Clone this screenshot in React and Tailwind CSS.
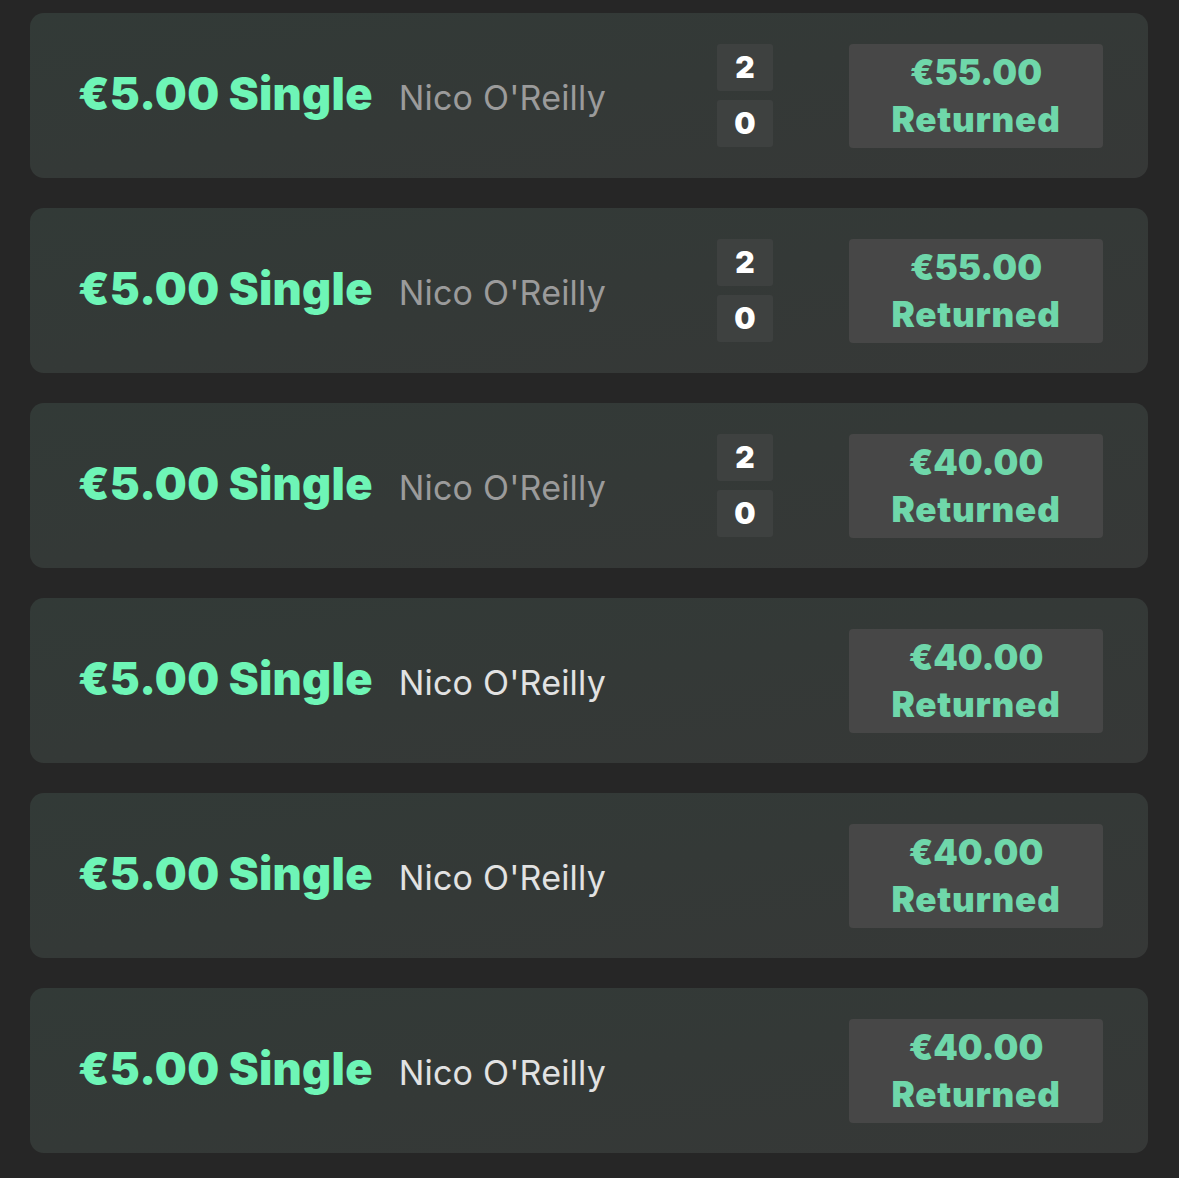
const bets = [
  { stake: '€5.00', type: 'Single', player: "Nico O'Reilly", score: ['2', '0'], returned: '€55.00', settled: true },
  { stake: '€5.00', type: 'Single', player: "Nico O'Reilly", score: ['2', '0'], returned: '€55.00', settled: true },
  { stake: '€5.00', type: 'Single', player: "Nico O'Reilly", score: ['2', '0'], returned: '€40.00', settled: true },
  { stake: '€5.00', type: 'Single', player: "Nico O'Reilly", returned: '€40.00' },
  { stake: '€5.00', type: 'Single', player: "Nico O'Reilly", returned: '€40.00' },
  { stake: '€5.00', type: 'Single', player: "Nico O'Reilly", returned: '€40.00' },
]

function BetCard({ bet }) {
  return (
    <div className="flex h-[165px] items-center rounded-[14px] bg-gradient-to-br from-[#323a37] to-[#363837] pl-[48px] pr-[45px]">
      <span className="pb-[4px] text-[45px] font-black leading-none tracking-[0.3px] text-[#6ef5b6]">
        {bet.stake} {bet.type}
      </span>
      <span
        className={`ml-[26px] flex-1 pt-[4px] text-[34px] leading-none tracking-[0.2px] ${
          bet.settled ? 'text-[#9b9b9b]' : 'text-[#e2e2e2]'
        }`}
      >
        {bet.player}
      </span>
      {bet.score && (
        <div className="flex flex-col gap-[9px]">
          {bet.score.map((s, i) => (
            <div
              key={i}
              className="flex h-[47px] w-[56px] items-center justify-center rounded-[3px] bg-[#3e4140] text-[30px] font-black text-white"
            >
              {s}
            </div>
          ))}
        </div>
      )}
      <div className="ml-[76px] flex h-[104px] w-[254px] flex-col items-center justify-center rounded-[4px] bg-[#474747] text-[35px] font-black leading-[47px] text-[#6fd7aa]">
        <span className="tracking-[0px]">{bet.returned}</span>
        <span className="tracking-[0.8px]">Returned</span>
      </div>
    </div>
  )
}

export default function App() {
  return (
    <div className="min-h-[1178px] bg-[#262626] px-[30px] pt-[13px] font-['Inter','Noto_Sans',sans-serif]">
      <div className="flex w-[1118px] flex-col gap-[30px]">
        {bets.map((bet, i) => (
          <BetCard key={i} bet={bet} />
        ))}
      </div>
    </div>
  )
}
